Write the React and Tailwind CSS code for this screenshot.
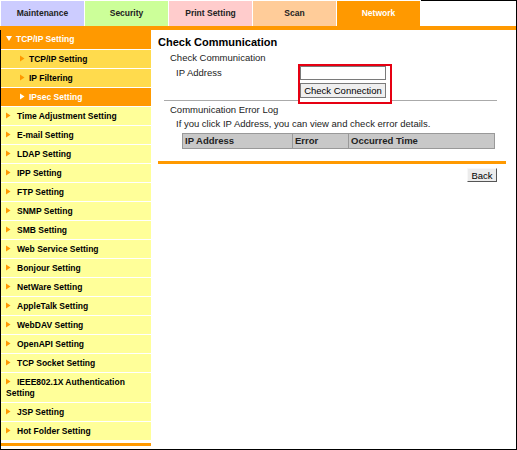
import React from "react";

const tabs = [
  { label: "Maintenance", bg: "bg-[#ccccff]", text: "text-[#222]" },
  { label: "Security", bg: "bg-[#ccff99]", text: "text-[#222]" },
  { label: "Print Setting", bg: "bg-[#ffcccc]", text: "text-[#222]" },
  { label: "Scan", bg: "bg-[#ffcc99]", text: "text-[#222]" },
  { label: "Network", bg: "bg-[#ff9900]", text: "text-white" },
];

const items = [
  "Time Adjustment Setting",
  "E-mail Setting",
  "LDAP Setting",
  "IPP Setting",
  "FTP Setting",
  "SNMP Setting",
  "SMB Setting",
  "Web Service Setting",
  "Bonjour Setting",
  "NetWare Setting",
  "AppleTalk Setting",
  "WebDAV Setting",
  "OpenAPI Setting",
  "TCP Socket Setting",
];

const Arrow = ({ color, gap = "mr-[6px]" }) => (
  <svg width="5" height="7" viewBox="0 0 5 7" className={`inline-block align-[0px] ${gap}`}>
    <polygon points="0,0.5 4.5,3.5 0,6.5" fill={color} />
  </svg>
);

const MenuItem = ({ children }) => (
  <div className="h-[19px] leading-[18px] pl-[5px] border-b border-white bg-[#ffff99] text-black">
    <Arrow color="#ff9900" />
    {children}
  </div>
);

const App = () => {
  return (
    <div className="w-[517px] h-[450px] bg-white flex flex-col font-['Liberation_Sans',Arial,sans-serif] overflow-hidden">
      {/* tabs */}
      <div className="flex h-[26px]">
        <div className="flex gap-px pl-px pt-px">
          {tabs.map((t) => (
            <div
              key={t.label}
              className={`w-[83px] h-[25px] flex items-center justify-center text-[8.5px] font-bold ${t.bg} ${t.text}`}
            >
              {t.label}
            </div>
          ))}
        </div>
        <div className="flex-1 ml-px border-t border-r border-black" />
      </div>
      <div className="h-[4px] bg-[#ff9900] border-r border-black" />

      {/* body */}
      <div className="flex-1 flex border-l border-r border-b border-black">
        <div className="w-[150px] flex flex-col text-[8.5px] font-bold">
          <div className="h-[20px] leading-[19px] pl-[5px] border-b border-white bg-[#ff9900] text-white">
            <svg width="6" height="5" viewBox="0 0 6 5" className="inline-block mr-[4px] align-[1px]">
              <polygon points="0,0 6,0 3,5" fill="#ffffff" />
            </svg>
            TCP/IP Setting
          </div>
          <div className="h-[19px] leading-[18px] pl-[19px] border-b border-white bg-[#ffdb4d] text-black">
            <Arrow color="#ff9900" gap="mr-[4px]" />
            TCP/IP Setting
          </div>
          <div className="h-[19px] leading-[18px] pl-[19px] border-b border-white bg-[#ffdb4d] text-black">
            <Arrow color="#ff9900" gap="mr-[4px]" />
            IP Filtering
          </div>
          <div className="h-[19px] leading-[18px] pl-[19px] border-b border-white bg-[#ff9900] text-white">
            <Arrow color="#ffffff" gap="mr-[4px]" />
            IPsec Setting
          </div>
          {items.map((it) => (
            <MenuItem key={it}>{it}</MenuItem>
          ))}
          <div className="h-[30px] pt-[4px] leading-[11px] pl-[5px] border-b border-white bg-[#ffff99] text-black">
            <Arrow color="#ff9900" />
            IEEE802.1X Authentication
            <br />
            Setting
          </div>
          <MenuItem>JSP Setting</MenuItem>
          <MenuItem>Hot Folder Setting</MenuItem>
          <div className="mt-[2px] h-[3px] bg-[#ff9900]" />
        </div>

        <div className="flex-1 relative pt-[6px] pl-[7px] pr-[10px] text-[9.5px] text-[#222] flex flex-col">
          <div className="text-[11px] font-bold leading-[13px] text-black">Check Communication</div>
          <div className="mt-[3px] pl-[12px] leading-[12px]">Check Communication</div>
          <div className="mt-[2px] pl-[18px] flex">
            <div className="w-[124px] h-[14px] leading-[14px]">IP Address</div>
            <div className="flex flex-col relative z-10">
              <input className="w-[86px] h-[14px] border border-[#7a7a7a] bg-white outline-none" />
              <button className="mt-[3px] w-[86px] h-[15px] leading-[13px] border border-[#7a7a7a] bg-[#efefef] text-[9.5px] text-black">
                Check Connection
              </button>
            </div>
          </div>
          <div className="mt-[2px] ml-[6px] mr-[9px] h-px bg-[#aaaaaa]" />
          <div className="mt-[3px] pl-[12px] leading-[12px]">Communication Error Log</div>
          <div className="mt-[2px] pl-[18px] leading-[12px]">
            If you click IP Address, you can view and check error details.
          </div>
          <div className="mt-[3px] ml-[24px] w-[313px] h-[16px] flex border border-[#999] bg-[#c8c8c8] font-bold text-[#222] leading-[14px]">
            <div className="w-[110px] pl-[2px] border-r border-[#999]">IP Address</div>
            <div className="w-[56px] pl-[2px] border-r border-[#999]">Error</div>
            <div className="flex-1 pl-[2px]">Occurred Time</div>
          </div>
          <div className="mt-[12px] h-[3px] bg-[#ff9900]" />
          <div className="mt-[4px] flex justify-end pr-[9px]">
            <button className="w-[30px] h-[14px] leading-[11px] bg-[#ececec] border border-[#f8f8f8] border-r-[#555] border-b-[#555] text-[9.5px] text-black">
              Back
            </button>
          </div>

          <div className="absolute left-[147px] top-[34px] w-[94px] h-[40px] border-2 border-[#e60012] bg-white" />
        </div>
      </div>
    </div>
  );
};

export default App;
